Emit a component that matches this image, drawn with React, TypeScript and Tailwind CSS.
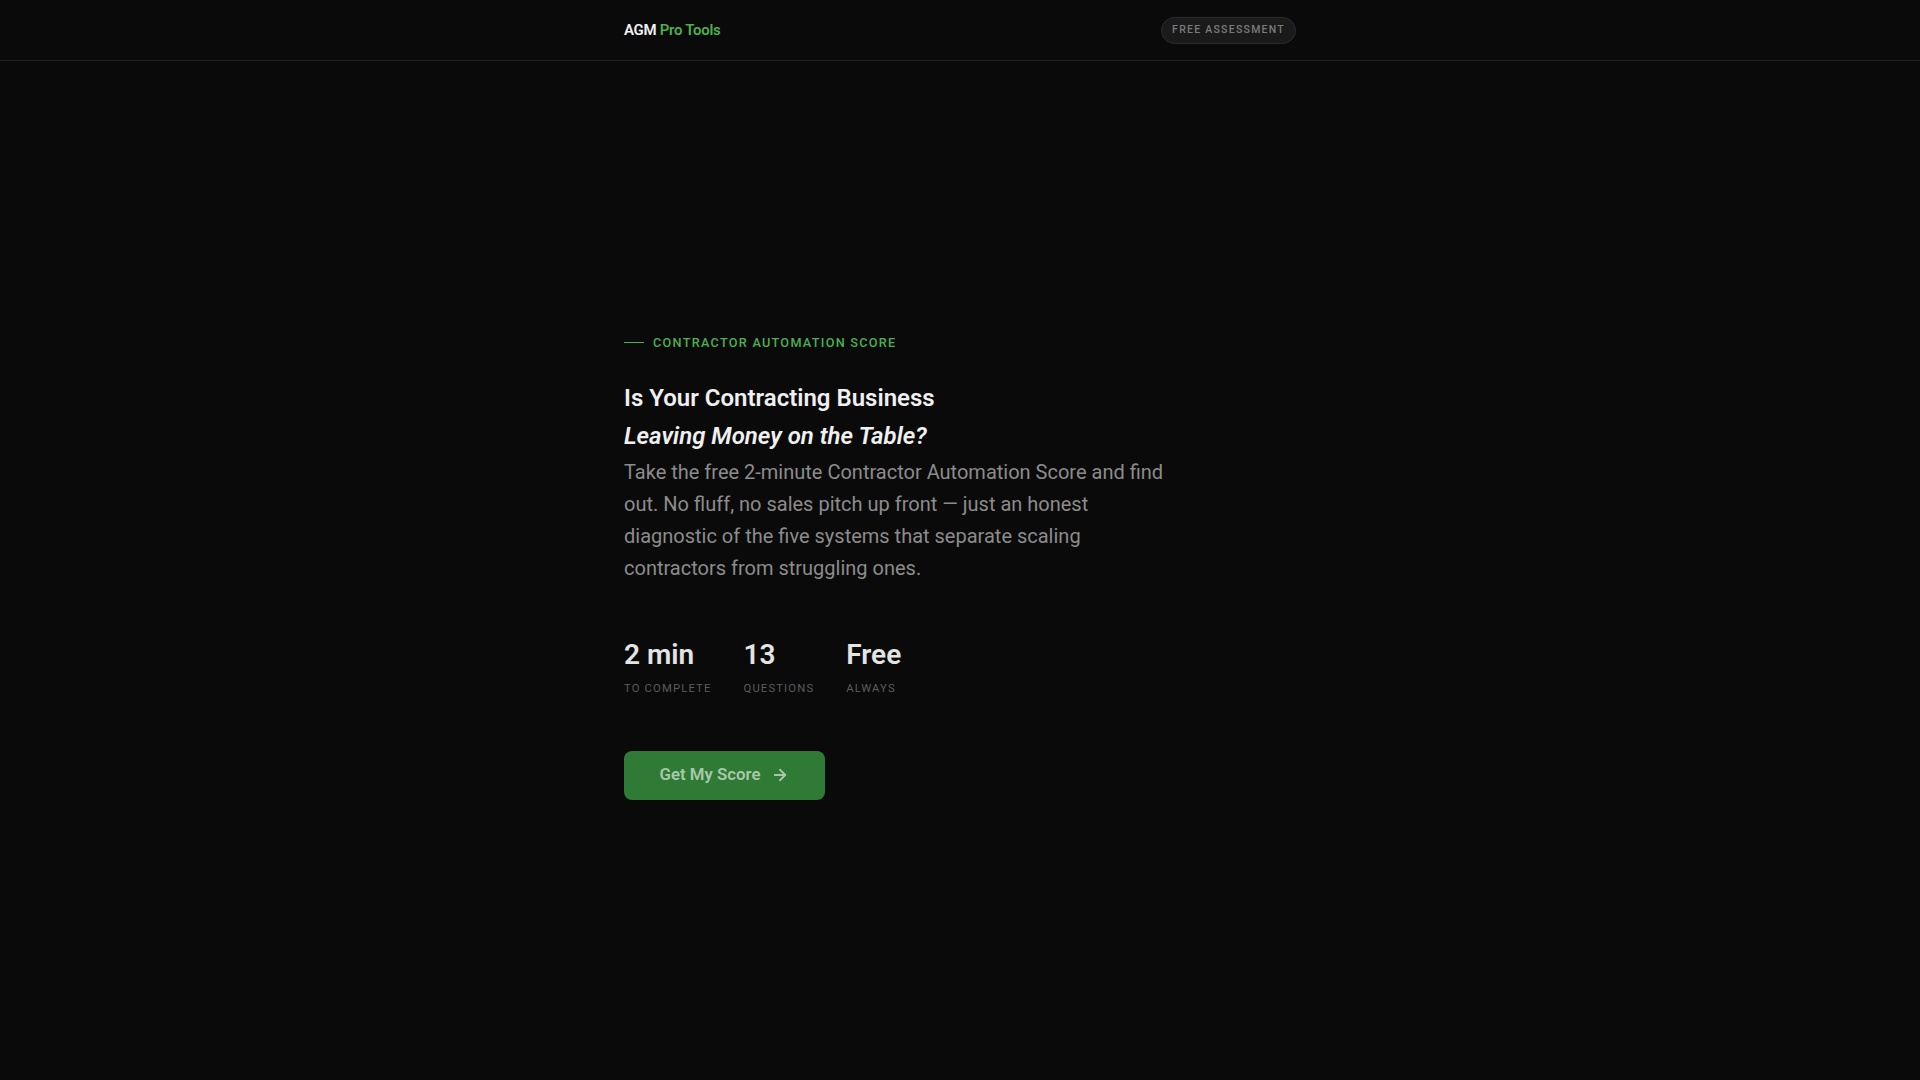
import React from "react";

export default function App() {
  return (
    <div
      className="min-h-screen flex flex-col bg-[#0a0a0a] text-white"
      style={{ fontFamily: "Roboto, 'Noto Sans', sans-serif" }}
    >
      <header className="h-[61px] border-b border-[#222222] flex-none">
        <div className="max-w-2xl mx-auto h-full flex items-center justify-between">
          <div className="text-[15px] font-semibold tracking-[-0.02em]">
            <span className="text-[#f2f2f2]">AGM</span>{" "}
            <span className="text-[#4caf50]">Pro Tools</span>
          </div>
          <div className="h-[27px] px-[10px] flex items-center rounded-full bg-[#1a1a1a] border border-[#2c2c2c] text-[10.5px] tracking-[0.12em] text-[#7a7a7a] font-medium">
            FREE ASSESSMENT
          </div>
        </div>
      </header>
      <main className="flex-1 flex items-center pb-[7px]">
        <div className="max-w-2xl w-full mx-auto">
          <div className="flex items-center gap-[9px] h-4">
            <span className="block w-[20px] h-[1.5px] bg-[#4caf50]" />
            <span className="text-[12.7px] font-medium tracking-[0.1em] text-[#4caf50]">
              CONTRACTOR AUTOMATION SCORE
            </span>
          </div>
          <h1 className="mt-[28px] text-[24px] leading-[38px] font-semibold text-[#f0f0f0]">
            Is Your Contracting Business
            <br />
            <em className="italic">Leaving Money on the Table?</em>
          </h1>
          <p className="mt-[1px] max-w-[540px] text-[20px] leading-[32px] text-[#8c8c8c]">
            Take the free 2-minute Contractor Automation Score and find out. No fluff, no sales pitch up front — just an honest diagnostic of the five systems that separate scaling contractors from struggling ones.
          </p>
          <div className="mt-[55px] flex gap-8">
            {[
              ["2 min", "TO COMPLETE"],
              ["13", "QUESTIONS"],
              ["Free", "ALWAYS"],
            ].map(([v, l]) => (
              <div key={l} className="flex flex-col">
                <span className="text-[28px] leading-[32px] font-semibold text-[#e4e4e4]">{v}</span>
                <span className="mt-[10px] text-[11.3px] leading-4 tracking-[0.1em] text-[#5c5c5c]">{l}</span>
              </div>
            ))}
          </div>
          <button className="mt-[54px] h-[49px] w-[201px] rounded-lg bg-[#2f7a34] flex items-center justify-center gap-[11px] text-[16.8px] font-semibold text-[#a8c9a9]">
            <span>Get My Score</span>
            <svg width="18" height="18" viewBox="0 0 24 24" fill="none" stroke="currentColor" strokeWidth="2.4" strokeLinecap="round" strokeLinejoin="round">
              <path d="M5 12h14" />
              <path d="M12 5l7 7-7 7" />
            </svg>
          </button>
        </div>
      </main>
    </div>
  );
}
